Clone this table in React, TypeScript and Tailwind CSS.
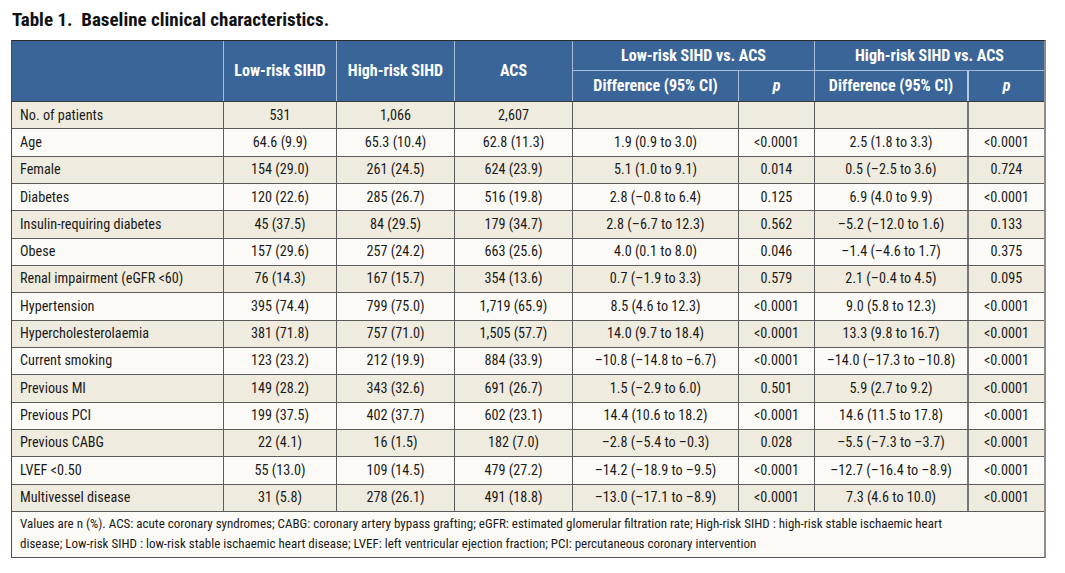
const font = "font-['Roboto_Condensed','Roboto',sans-serif]";

const cols = "grid grid-cols-[212px_113px_118px_118px_166px_76px_154px_75px]";

const rows: string[][] = [
  ["No. of patients", "531", "1,066", "2,607", "", "", "", ""],
  ["Age", "64.6 (9.9)", "65.3 (10.4)", "62.8 (11.3)", "1.9 (0.9 to 3.0)", "<0.0001", "2.5 (1.8 to 3.3)", "<0.0001"],
  ["Female", "154 (29.0)", "261 (24.5)", "624 (23.9)", "5.1 (1.0 to 9.1)", "0.014", "0.5 (–2.5 to 3.6)", "0.724"],
  ["Diabetes", "120 (22.6)", "285 (26.7)", "516 (19.8)", "2.8 (–0.8 to 6.4)", "0.125", "6.9 (4.0 to 9.9)", "<0.0001"],
  ["Insulin-requiring diabetes", "45 (37.5)", "84 (29.5)", "179 (34.7)", "2.8 (–6.7 to 12.3)", "0.562", "–5.2 (–12.0 to 1.6)", "0.133"],
  ["Obese", "157 (29.6)", "257 (24.2)", "663 (25.6)", "4.0 (0.1 to 8.0)", "0.046", "–1.4 (–4.6 to 1.7)", "0.375"],
  ["Renal impairment (eGFR <60)", "76 (14.3)", "167 (15.7)", "354 (13.6)", "0.7 (–1.9 to 3.3)", "0.579", "2.1 (–0.4 to 4.5)", "0.095"],
  ["Hypertension", "395 (74.4)", "799 (75.0)", "1,719 (65.9)", "8.5 (4.6 to 12.3)", "<0.0001", "9.0 (5.8 to 12.3)", "<0.0001"],
  ["Hypercholesterolaemia", "381 (71.8)", "757 (71.0)", "1,505 (57.7)", "14.0 (9.7 to 18.4)", "<0.0001", "13.3 (9.8 to 16.7)", "<0.0001"],
  ["Current smoking", "123 (23.2)", "212 (19.9)", "884 (33.9)", "–10.8 (–14.8 to –6.7)", "<0.0001", "–14.0 (–17.3 to –10.8)", "<0.0001"],
  ["Previous MI", "149 (28.2)", "343 (32.6)", "691 (26.7)", "1.5 (–2.9 to 6.0)", "0.501", "5.9 (2.7 to 9.2)", "<0.0001"],
  ["Previous PCI", "199 (37.5)", "402 (37.7)", "602 (23.1)", "14.4 (10.6 to 18.2)", "<0.0001", "14.6 (11.5 to 17.8)", "<0.0001"],
  ["Previous CABG", "22 (4.1)", "16 (1.5)", "182 (7.0)", "–2.8 (–5.4 to –0.3)", "0.028", "–5.5 (–7.3 to –3.7)", "<0.0001"],
  ["LVEF <0.50", "55 (13.0)", "109 (14.5)", "479 (27.2)", "–14.2 (–18.9 to –9.5)", "<0.0001", "–12.7 (–16.4 to –8.9)", "<0.0001"],
  ["Multivessel disease", "31 (5.8)", "278 (26.1)", "491 (18.8)", "–13.0 (–17.1 to –8.9)", "<0.0001", "7.3 (4.6 to 10.0)", "<0.0001"],
];

function HeaderCell({ children, className = "" }: { children?: React.ReactNode; className?: string }) {
  return (
    <div className={`flex items-center justify-center whitespace-nowrap border-[#a9bdd6] text-[16px] font-bold text-white ${className}`}>
      {children}
    </div>
  );
}

export default function App() {
  return (
    <div className={`h-[573px] w-[1065px] bg-white ${font} text-[#1a1a1a]`}>
      <div className="ml-[12px] pt-[8px] text-[19px] leading-[24px] font-bold text-[#111]">
        Table 1.&nbsp; Baseline clinical characteristics.
      </div>

      <div className="mt-[8px] ml-[11px] w-[1035px] border-t border-l border-r-2 border-b border-t-[#2b2b2b] border-l-[#4a4a4a] border-r-[#8d8d8d] border-b-[#555]">
        {/* header */}
        <div className={`${cols} grid-rows-[30px_30px] bg-[#3a6599] border-b border-[#3a3a3a]`}>
          <HeaderCell className="row-span-2 border-r" />
          <HeaderCell className="row-span-2 border-r">Low-risk SIHD</HeaderCell>
          <HeaderCell className="row-span-2 border-r">High-risk SIHD</HeaderCell>
          <HeaderCell className="row-span-2 border-r">ACS</HeaderCell>
          <HeaderCell className="col-span-2 border-r border-b">Low-risk SIHD vs. ACS</HeaderCell>
          <HeaderCell className="col-span-2 border-b">High-risk SIHD vs. ACS</HeaderCell>
          <HeaderCell className="border-r">Difference (95% CI)</HeaderCell>
          <HeaderCell className="border-r italic">p</HeaderCell>
          <HeaderCell className="border-r-2 border-r-[#b7c6da]">Difference (95% CI)</HeaderCell>
          <HeaderCell className="italic">p</HeaderCell>
        </div>

        {/* body */}
        {rows.map((r, i) => (
          <div
            key={r[0]}
            className={`${cols} h-[27.33px] border-b border-[#5c5c5c] text-[14.2px] ${i % 2 === 0 ? "bg-[#efebde]" : "bg-[#fbfaf6]"}`}
          >
            {r.map((c, j) => (
              <div
                key={j}
                className={`flex items-center whitespace-nowrap border-[#5c5c5c] ${
                  j === 0 ? "pl-[8px]" : "justify-center"
                } ${j === 6 ? "border-r-2 border-r-[#777]" : j < 7 ? "border-r" : ""}`}
              >
                {c}
              </div>
            ))}
          </div>
        ))}

        {/* footnote */}
        <div className="h-[45px] whitespace-nowrap bg-[#fbfaf6] pl-[8px] pt-[2px] text-[13px] leading-[20px]">
          Values are n (%). ACS: acute coronary syndromes; CABG: coronary artery bypass grafting; eGFR: estimated glomerular filtration rate; High-risk SIHD : high-risk stable ischaemic heart
          <br />
          disease; Low-risk SIHD : low-risk stable ischaemic heart disease; LVEF: left ventricular ejection fraction; PCI: percutaneous coronary intervention
        </div>
      </div>
    </div>
  );
}
